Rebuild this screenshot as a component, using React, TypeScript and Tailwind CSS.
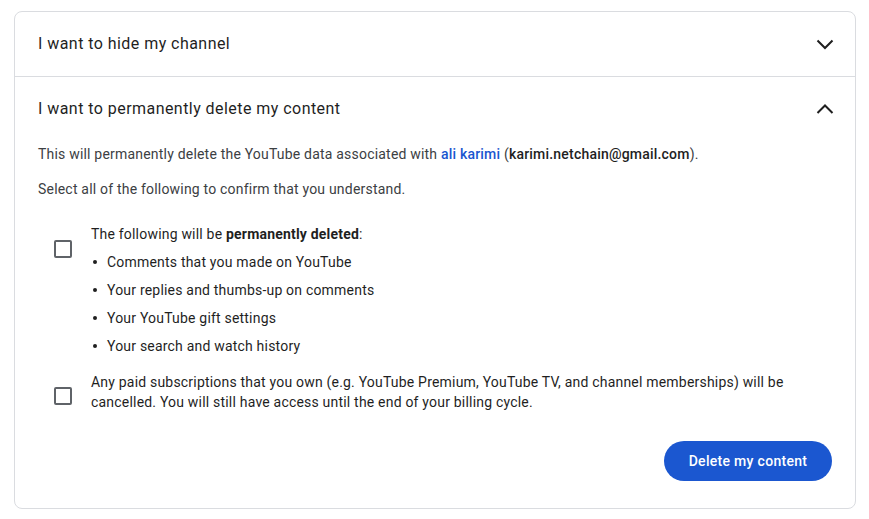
import React from 'react';

const font = { fontFamily: 'Roboto, "Noto Sans", Arial, sans-serif' };

function Chevron({ up }: { up?: boolean }) {
  return (
    <svg width="24" height="24" viewBox="0 0 24 24" fill="none" className="shrink-0">
      <polyline
        points={up ? '4.5,16 12,8.5 19.5,16' : '4.5,8.5 12,16 19.5,8.5'}
        stroke="#1f1f1f"
        strokeWidth="2"
        strokeLinecap="butt"
        strokeLinejoin="miter"
      />
    </svg>
  );
}

function Checkbox() {
  return (
    <div className="w-[18px] h-[18px] border-2 border-[#5f6368] rounded-[2px] shrink-0 bg-white" />
  );
}

function Bullet({ children }: { children: React.ReactNode }) {
  return (
    <li className="flex items-center mt-[8px] leading-[20px]">
      <span className="w-[16px] flex pl-[2px]">
        <span className="w-[4px] h-[4px] rounded-full bg-[#1f1f1f]" />
      </span>
      <span>{children}</span>
    </li>
  );
}

export default function App() {
  const items = [
    'Comments that you made on YouTube',
    'Your replies and thumbs-up on comments',
    'Your YouTube gift settings',
    'Your search and watch history',
  ];

  return (
    <div className="min-h-screen bg-white pt-[11px] pl-[14px]" style={font}>
      <div className="w-[842px] border border-[#dadce0] rounded-[8px] bg-white">
        {/* collapsed section */}
        <div className="h-[64px] flex items-center justify-between pl-[23px] pr-[18px]">
          <span className="text-[16px] tracking-[0.45px] text-[#1f1f1f]">I want to hide my channel</span>
          <Chevron />
        </div>

        <div className="border-t border-[#dadce0]">
          {/* expanded section */}
          <div className="h-[64px] flex items-center justify-between pl-[23px] pr-[18px]">
            <span className="text-[16px] tracking-[0.45px] text-[#1f1f1f]">
              I want to permanently delete my content
            </span>
            <Chevron up />
          </div>

          <div className="pl-[23px] pr-[23px] pt-[3px] pb-[27px] text-[14px] leading-[20px] tracking-[0.2px] text-[#3c4043]">
            <p>
              This will permanently delete the YouTube data associated with{' '}
              <span className="font-medium text-[#1a56d0]">ali karimi</span> (
              <span className="font-medium text-[#1f1f1f]">karimi.netchain@gmail.com</span>).
            </p>
            <p className="mt-[15px]">Select all of the following to confirm that you understand.</p>

            <div className="flex mt-[25px]">
              <div className="pl-[16px] pr-[19px] pt-[16px]">
                <Checkbox />
              </div>
              <div className="text-[#1f1f1f]">
                <p>
                  The following will be <span className="font-bold">permanently deleted</span>:
                </p>
                <ul>
                  {items.map((t) => (
                    <Bullet key={t}>{t}</Bullet>
                  ))}
                </ul>
              </div>
            </div>

            <div className="flex mt-[16px]">
              <div className="pl-[16px] pr-[19px] pt-[15px]">
                <Checkbox />
              </div>
              <p className="text-[#1f1f1f]">
                Any paid subscriptions that you own (e.g. YouTube Premium, YouTube TV, and channel memberships) will be
                <br />
                cancelled. You will still have access until the end of your billing cycle.
              </p>
            </div>

            <div className="flex justify-end mt-[29px]">
              <button className="h-[40px] w-[168px] rounded-full bg-[#1b57d0] text-white text-[14px] font-medium tracking-[0.3px]">
                Delete my content
              </button>
            </div>
          </div>
        </div>
      </div>
    </div>
  );
}
